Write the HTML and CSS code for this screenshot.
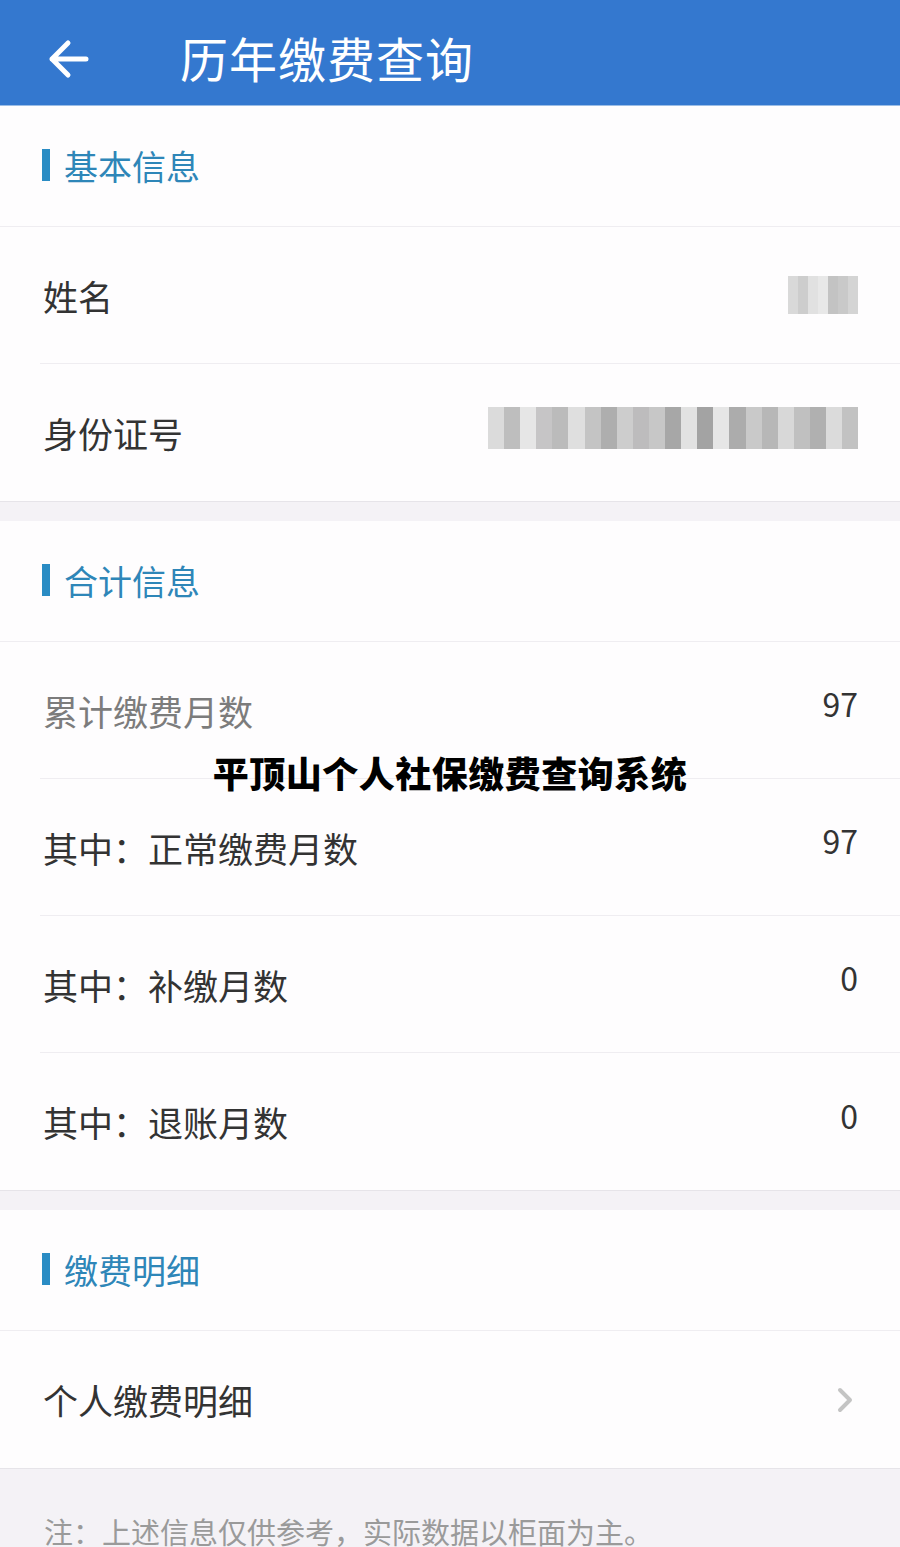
FILE: index.html
```html
<!DOCTYPE html>
<html lang="zh-CN">
<head>
    <meta charset="UTF-8">
    <meta name="viewport" content="width=device-width, initial-scale=1.0">
    <title>历年缴费查询</title>
    <link rel="stylesheet" href="styles.css">
</head>
<body>
    <div class="page">
        <header class="topbar">
            <button class="back-btn" aria-label="返回">
                <svg width="44" height="44" viewBox="0 0 44 44">
                    <path d="M40 22 H6 M22 6 L6 22 L22 38" fill="none" stroke="#fff" stroke-width="5" stroke-linecap="round" stroke-linejoin="round"/>
                </svg>
            </button>
            <h1 class="topbar-title">历年缴费查询</h1>
        </header>

        <section class="card">
            <div class="card-title"><span class="accent"></span>基本信息</div>
            <div class="row">
                <span class="label">姓名</span>
                <span class="mosaic mosaic-name">
                    <i style="background:#d6d6d6"></i><i style="background:#c8c8c8"></i><i style="background:#dedede"></i><i style="background:#e6e6e6"></i><i style="background:#bdbdbd"></i><i style="background:#c4c4c4"></i><i style="background:#d0d0d0"></i>
                </span>
            </div>
            <div class="row">
                <span class="label">身份证号</span>
                <span class="mosaic mosaic-id">
                    <i style="background:#d8d8d8"></i><i style="background:#b8b8b8"></i><i style="background:#e4e4e4"></i><i style="background:#c0c0c0"></i><i style="background:#b4b4b4"></i><i style="background:#dcdcdc"></i><i style="background:#bebebe"></i><i style="background:#a6a6a6"></i><i style="background:#c8c8c8"></i><i style="background:#b6b6b6"></i><i style="background:#c2c2c2"></i><i style="background:#9e9e9e"></i><i style="background:#e0e0e0"></i><i style="background:#9a9a9a"></i><i style="background:#e4e4e4"></i><i style="background:#a4a4a4"></i><i style="background:#c4c4c4"></i><i style="background:#b0b0b0"></i><i style="background:#d4d4d4"></i><i style="background:#bababa"></i><i style="background:#a8a8a8"></i><i style="background:#d8d8d8"></i><i style="background:#bcbcbc"></i>
                </span>
            </div>
        </section>

        <section class="card">
            <div class="card-title"><span class="accent"></span>合计信息</div>
            <div class="row">
                <span class="label label-faded">累计缴费月数</span>
                <span class="value">97</span>
            </div>
            <div class="row">
                <span class="label">其中：正常缴费月数</span>
                <span class="value">97</span>
            </div>
            <div class="row">
                <span class="label">其中：补缴月数</span>
                <span class="value">0</span>
            </div>
            <div class="row">
                <span class="label">其中：退账月数</span>
                <span class="value">0</span>
            </div>
        </section>

        <section class="card">
            <div class="card-title"><span class="accent"></span>缴费明细</div>
            <div class="row">
                <span class="label">个人缴费明细</span>
                <svg class="chevron" width="20" height="28" viewBox="0 0 20 28">
                    <path d="M5 4 L15 14 L5 24" fill="none" stroke="#c4c4c4" stroke-width="4" stroke-linecap="round" stroke-linejoin="round"/>
                </svg>
            </div>
        </section>

        <p class="note">注：上述信息仅供参考，实际数据以柜面为主。</p>

        <div class="watermark">平顶山个人社保缴费查询系统</div>
    </div>
</body>
</html>
```

FILE: styles.css
```css
* {
    box-sizing: border-box;
}

body {
    margin: 0;
    font-family: "Noto Sans CJK SC", "Noto Sans", sans-serif;
    background-color: #f4f2f6;
    color: #333;
}

.page {
    position: relative;
    width: 900px;
    min-height: 1547px;
}

.topbar {
    height: 106px;
    background-color: #3478cf;
    display: flex;
    align-items: center;
    padding-left: 46px;
    border-bottom: 1px solid #9bbde6;
}

.back-btn {
    background: none;
    border: none;
    padding: 0;
    width: 44px;
    height: 44px;
    margin-top: 12px;
    cursor: pointer;
}

.topbar-title {
    margin: 8px 0 0 90px;
    font-size: 48px;
    font-weight: 400;
    color: #fff;
    letter-spacing: 1px;
}

.card {
    background-color: #fefdfe;
    margin-bottom: 20px;
    box-shadow: 0 1px 0 #e6e4e9;
}

.card-title {
    height: 121px;
    display: flex;
    align-items: center;
    padding-left: 42px;
    padding-bottom: 2px;
    font-size: 34px;
    color: #2e86b8;
    border-bottom: 1px solid #efedf1;
}

.accent {
    width: 8px;
    height: 32px;
    background-color: #2a8cc4;
    margin-right: 14px;
}

.row {
    height: 137px;
    margin-left: 40px;
    padding-right: 42px;
    display: flex;
    align-items: center;
    justify-content: space-between;
    border-bottom: 1px solid #efedf1;
}

.row:last-child {
    border-bottom: none;
}

.label {
    font-size: 35px;
    color: #333;
    margin-left: 3px;
}

.label-faded {
    color: #7c7c7c;
}

.value {
    font-size: 32px;
    color: #333;
    margin-bottom: 14px;
}

.mosaic {
    display: flex;
    opacity: 0.9;
}

.mosaic i {
    display: block;
    height: 100%;
}

.mosaic-name {
    width: 70px;
    height: 38px;
}

.mosaic-name i {
    flex: 1;
}

.mosaic-id {
    width: 370px;
    height: 42px;
    margin-bottom: 10px;
}

.mosaic-id i {
    flex: 1;
}

.chevron {
    margin-right: 3px;
}

.note {
    margin: 0;
    margin-top: -20px;
    padding: 42px 0 0 44px;
    font-size: 29px;
    color: #9a9a9a;
}

.watermark {
    position: absolute;
    top: 746px;
    left: 0;
    width: 900px;
    text-align: center;
    font-size: 36px;
    font-weight: 900;
    color: #000;
    letter-spacing: 0.5px;
}
```
